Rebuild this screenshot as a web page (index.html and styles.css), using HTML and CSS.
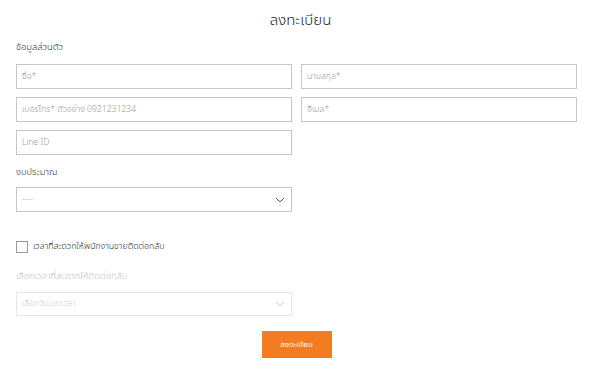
FILE: index.html
```html
<!DOCTYPE html>
<html lang="th">
<head>
  <meta charset="UTF-8" />
  <title>ลงทะเบียน</title>
  <link rel="stylesheet" href="styles.css">
</head>
<body>
  <form class="register">
    <h1 class="title">ลงทะเบียน</h1>

    <div class="section-label">ข้อมูลส่วนตัว</div>
    <div class="field-grid">
      <input class="field" type="text" placeholder="ชื่อ*">
      <input class="field" type="text" placeholder="นามสกุล*">
      <input class="field" type="text" placeholder="เบอร์โทร* ตัวอย่าง 0921231234">
      <input class="field" type="text" placeholder="อีเมล*">
      <input class="field" type="text" placeholder="Line ID">
    </div>

    <div class="section-label budget-label">งบประมาณ</div>
    <div class="select">
      <span class="select-text">----</span>
      <svg class="chevron" width="10" height="6" viewBox="0 0 10 6"><path d="M1 1 L5 5 L9 1" fill="none" stroke="#555" stroke-width="1"/></svg>
    </div>

    <label class="check-row">
      <span class="check-box"></span>
      <span>เวลาที่สะดวกให้พนักงานขายติดต่อกลับ</span>
    </label>

    <div class="section-label muted">เลือกเวลาที่สะดวกให้ติดต่อกลับ</div>
    <div class="select disabled">
      <span class="select-text">เลือกวันและเวลา</span>
      <svg class="chevron" width="10" height="6" viewBox="0 0 10 6"><path d="M1 1 L5 5 L9 1" fill="none" stroke="#ccc" stroke-width="1"/></svg>
    </div>

    <div class="actions">
      <button type="button" class="submit-btn">ลงทะเบียน</button>
    </div>
  </form>
</body>
</html>
```

FILE: styles.css
```css
body {
  font-family: "Noto Sans Thai", "Noto Sans", "DejaVu Sans", sans-serif;
  font-weight: 300;
  background: #fff;
  color: #2e2e2e;
  line-height: 16px;
  margin: 0;
  padding: 0;
}

.register {
  width: 561px;
  margin-left: 16px;
}

.title {
  font-size: 15px;
  font-weight: 300;
  line-height: 24px;
  text-align: center;
  margin: 9px 0 0 0;
  padding-left: 8px;
  color: #222;
}

.section-label {
  font-size: 9.3px;
  line-height: 16px;
  margin-top: 6px;
  margin-bottom: 9px;
  color: #2e2e2e;
}

.budget-label {
  margin-top: 9px;
  margin-bottom: 7px;
}

.muted {
  color: #c4c4c4;
  margin-top: 15px;
  margin-bottom: 8px;
}

.field-grid {
  display: grid;
  grid-template-columns: 276px 276px;
  column-gap: 9px;
  row-gap: 8px;
}

.field {
  box-sizing: border-box;
  height: 25px;
  border: 1px solid #c6c6c6;
  padding: 0 5px;
  font-family: inherit;
  font-weight: 300;
  font-size: 8.6px;
  color: #333;
  outline: none;
}

.field::placeholder {
  color: #999;
}

.select {
  box-sizing: border-box;
  width: 276px;
  height: 25px;
  border: 1px solid #c6c6c6;
  display: flex;
  align-items: center;
  justify-content: space-between;
  padding: 0 6px 0 5px;
  font-size: 8.6px;
  color: #a0a0a0;
}

.select.disabled {
  height: 24px;
  border-color: #e6e6e6;
  color: #cfcfcf;
}

.check-row {
  display: flex;
  align-items: center;
  gap: 5px;
  margin-top: 29px;
  font-size: 8.8px;
  line-height: 12px;
  color: #2e2e2e;
}

.check-box {
  box-sizing: border-box;
  width: 12px;
  height: 12px;
  border: 1px solid #999;
  background: #fff;
}

.actions {
  display: flex;
  justify-content: center;
  margin-top: 15px;
}

.submit-btn {
  width: 70px;
  height: 27px;
  background-color: #f47c20;
  color: #fff;
  border: none;
  font-family: inherit;
  font-weight: 400;
  font-size: 7.8px;
  cursor: pointer;
}
```
